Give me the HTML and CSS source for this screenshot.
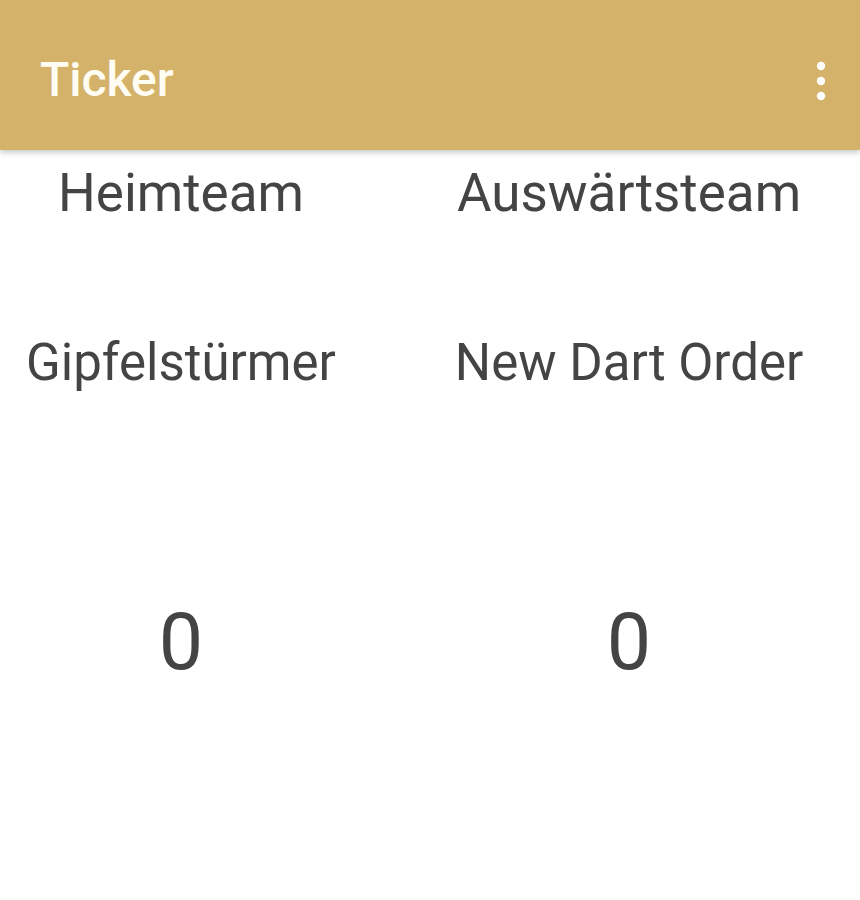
FILE: index.html
```html
<!DOCTYPE html>
<html lang="de">
    <head>
        <meta charset="UTF-8">
        <meta name="viewport" content="width=device-width, initial-scale=1.0">
        <title>Ticker</title>
        <link rel="stylesheet" href="styles.css">
    </head>
    <body>
        <header class="toolbar">
            <h1 class="toolbar-title">Ticker</h1>
            <button class="overflow" aria-label="Mehr Optionen">
                <svg width="12" height="40" viewBox="0 0 12 40">
                    <circle cx="6" cy="5" r="4.2" fill="#fff"/>
                    <circle cx="6" cy="20" r="4.2" fill="#fff"/>
                    <circle cx="6" cy="35" r="4.2" fill="#fff"/>
                </svg>
            </button>
        </header>

        <main class="ticker">
            <div class="row labels">
                <div class="cell">Heimteam</div>
                <div class="cell">Auswärtsteam</div>
            </div>
            <div class="row teams">
                <div class="cell">Gipfelstürmer</div>
                <div class="cell">New Dart Order</div>
            </div>
            <div class="row score">
                <div class="cell">0</div>
                <div class="cell">0</div>
            </div>
        </main>
    </body>
</html>
```

FILE: styles.css
```css
body {
    margin: 0;
    font-family: Roboto, "Noto Sans", Arial, sans-serif;
    background-color: #fff;
    color: #444;
}
.toolbar {
    height: 150px;
    box-sizing: border-box;
    background-color: #d4b26a;
    display: flex;
    align-items: center;
    justify-content: space-between;
    padding: 12px 33px 0 40px;
    box-shadow: 0 2px 6px rgba(0, 0, 0, 0.25);
    position: relative;
}
.toolbar-title {
    margin: 0;
    color: #fffdf3;
    font-size: 48px;
    font-weight: 500;
    line-height: 1;
    padding-bottom: 2px;
}
.overflow {
    background: none;
    border: none;
    padding: 0;
    display: flex;
}
.row {
    display: grid;
    grid-template-columns: 362px 1fr;
    column-gap: 36px;
    text-align: center;
}
.labels {
    font-size: 53px;
    line-height: 64px;
    padding-top: 11px;
}
.teams {
    font-size: 51px;
    line-height: 64px;
    padding-top: 106px;
}
.score {
    font-size: 79px;
    line-height: 96px;
    padding-top: 199px;
}
```
